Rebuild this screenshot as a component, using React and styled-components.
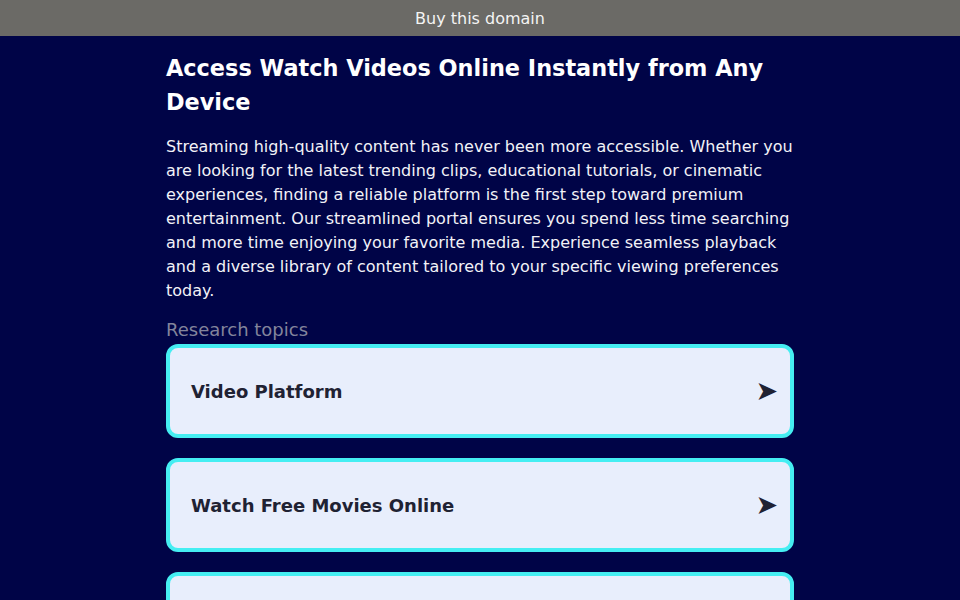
import styled, { createGlobalStyle } from 'styled-components'

const GlobalStyle = createGlobalStyle`
  html, body {
    margin: 0;
    padding: 0;
    background: #000447;
    font-family: "DejaVu Sans", "Liberation Sans", sans-serif;
  }
`

const TopBar = styled.div`
  height: 36px;
  background: #6b6a66;
  color: #f4f4f4;
  font-size: 16px;
  display: flex;
  align-items: center;
  justify-content: center;
`

const Main = styled.main`
  width: 628px;
  margin: 0 auto;
  padding-top: 15px;
  color: #ffffff;
`

const Title = styled.h1`
  margin: 0 0 16px;
  font-size: 22.4px;
  line-height: 34px;
  font-weight: bold;
`

const Intro = styled.p`
  margin: 0 0 15px;
  font-size: 16px;
  line-height: 24px;
  color: #f2f2f7;
`

const Label = styled.div`
  font-size: 18px;
  line-height: 24px;
  color: #83849c;
  margin-bottom: 2px;
`

const List = styled.div`
  display: flex;
  flex-direction: column;
  gap: 20px;
`

const Card = styled.a`
  box-sizing: border-box;
  height: 94px;
  display: flex;
  align-items: center;
  justify-content: space-between;
  padding: 0 12px 0 21px;
  background: #e8eefc;
  border: 4px solid #45eef2;
  border-radius: 12px;
  color: #1f2233;
  font-size: 18px;
  font-weight: bold;
  text-decoration: none;
  cursor: pointer;
`

const Arrow = styled.span`
  font-size: 27px;
  line-height: 1;
  margin-top: -2px;
  color: #1f2233;
`

const topics = ['Video Platform', 'Watch Free Movies Online', 'Online Streaming Services']

export default function App() {
  return (
    <>
      <GlobalStyle />
      <TopBar>Buy this domain</TopBar>
      <Main>
        <Title>Access Watch Videos Online Instantly from Any Device</Title>
        <Intro>
          Streaming high-quality content has never been more accessible. Whether you
          are looking for the latest trending clips, educational tutorials, or cinematic
          experiences, finding a reliable platform is the first step toward premium
          entertainment. Our streamlined portal ensures you spend less time searching
          and more time enjoying your favorite media. Experience seamless playback
          and a diverse library of content tailored to your specific viewing preferences
          today.
        </Intro>
        <Label>Research topics</Label>
        <List>
          {topics.map((t) => (
            <Card key={t}>
              {t}
              <Arrow>➤</Arrow>
            </Card>
          ))}
        </List>
      </Main>
    </>
  )
}
